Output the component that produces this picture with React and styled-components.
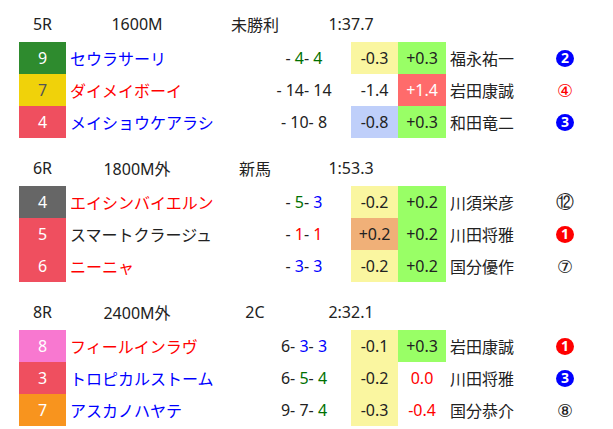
import React from "react"
import styled, { createGlobalStyle } from "styled-components"

const Global = createGlobalStyle`
  body {
    margin: 0;
    background: #fff;
    font-family: "Noto Sans", "Noto Sans CJK JP", sans-serif;
    font-size: 16px;
    color: #222;
  }
`

const Page = styled.div`
  padding: 6px 0 0 19px;
`

const Race = styled.section`
  margin-bottom: 12px;
`

const Header = styled.div`
  display: grid;
  grid-template-columns: 47px 142px 94px 98px;
  height: 36px;
  align-items: center;
  text-align: center;
`

const Row = styled.div`
  display: grid;
  grid-template-columns: 47px 191px 94px 47px 48px 94px 50px;
  height: 32px;
  align-items: center;
`

const Num = styled.div`
  height: 100%;
  display: flex;
  align-items: center;
  justify-content: center;
  background: ${(p) => p.$bg};
  color: ${(p) => p.$fg || "#fff"};
`

const Name = styled.div`
  padding-left: 4px;
  color: ${(p) => p.$color};
  white-space: nowrap;
`

const Pass = styled.div`
  text-align: center;
  white-space: pre;
`

const Corner = styled.span`
  color: ${(p) => p.$color || "inherit"};
`

const Diff = styled.div`
  height: 100%;
  display: flex;
  align-items: center;
  justify-content: center;
  background: ${(p) => p.$bg || "transparent"};
  color: ${(p) => p.$fg || "#222"};
`

const Jockey = styled.div`
  padding-left: 4px;
  white-space: nowrap;
`

const Pop = styled.div`
  display: flex;
  justify-content: center;
  align-items: center;
  font-family: "DejaVu Sans", sans-serif;
  font-size: 18px;
  color: ${(p) => p.$color || "#222"};
`

const Badge = styled.span`
  display: inline-flex;
  align-items: center;
  justify-content: center;
  width: 18px;
  height: 17px;
  border-radius: 50%;
  background: ${(p) => p.$color};
  color: #fff;
  font-family: "Noto Sans", sans-serif;
  font-size: 14px;
  font-weight: 700;
  line-height: 1;
`

const G = "#007000"
const B = "#0000ff"
const R = "#ff0000"

const frame = {
  green: ["#2e8b2e"],
  yellow: ["#f0d20a", "#555"],
  red: ["#ef4f5f"],
  gray: ["#666666"],
  pink: ["#f878d0"],
  orange: ["#f8941e"],
}

const races = [
  {
    head: ["5R", "1600M", "未勝利", "1:37.7"],
    rows: [
      { no: 9, f: "green", name: "セウラサーリ", nc: B, pass: [[""], ["4", G], ["4", G]], d1: ["-0.3", "#faf6a0"], d2: ["+0.3", "#99ff66"], jockey: "福永祐一", pop: { n: 2, c: B, fill: true } },
      { no: 7, f: "yellow", name: "ダイメイボーイ", nc: R, pass: [[""], ["14"], ["14"]], d1: ["-1.4"], d2: ["+1.4", "#ff6b6b", "#fff"], jockey: "岩田康誠", pop: { g: "④", c: R } },
      { no: 4, f: "red", name: "メイショウケアラシ", nc: B, pass: [[""], ["10"], ["8"]], d1: ["-0.8", "#bfcffa"], d2: ["+0.3", "#99ff66"], jockey: "和田竜二", pop: { n: 3, c: B, fill: true } },
    ],
  },
  {
    head: ["6R", "1800M外", "新馬", "1:53.3"],
    rows: [
      { no: 4, f: "gray", name: "エイシンバイエルン", nc: R, pass: [[""], ["5", G], ["3", B]], d1: ["-0.2", "#faf6a0"], d2: ["+0.2", "#99ff66"], jockey: "川須栄彦", pop: { g: "⑫" } },
      { no: 5, f: "red", name: "スマートクラージュ", nc: "#222", pass: [[""], ["1", R], ["1", R]], d1: ["+0.2", "#f0b078"], d2: ["+0.2", "#99ff66"], jockey: "川田将雅", pop: { n: 1, c: R, fill: true } },
      { no: 6, f: "red", name: "ニーニャ", nc: R, pass: [[""], ["3", B], ["3", B]], d1: ["-0.2", "#faf6a0"], d2: ["+0.2", "#99ff66"], jockey: "国分優作", pop: { g: "⑦" } },
    ],
  },
  {
    head: ["8R", "2400M外", "2C", "2:32.1"],
    rows: [
      { no: 8, f: "pink", name: "フィールインラヴ", nc: R, pass: [["6"], ["3", B], ["3", B]], d1: ["-0.1", "#faf6a0"], d2: ["+0.3", "#99ff66"], jockey: "岩田康誠", pop: { n: 1, c: R, fill: true } },
      { no: 3, f: "red", name: "トロピカルストーム", nc: B, pass: [["6"], ["5", G], ["4", G]], d1: ["-0.2", "#faf6a0"], d2: ["0.0", null, R], jockey: "川田将雅", pop: { n: 3, c: B, fill: true } },
      { no: 7, f: "orange", name: "アスカノハヤテ", nc: B, pass: [["9"], ["7"], ["4", G]], d1: ["-0.3", "#faf6a0"], d2: ["-0.4", null, R], jockey: "国分恭介", pop: { g: "⑧" } },
    ],
  },
]

const Passing = ({ items }) => (
  <Pass>
    {items.map(([v, c], i) => (
      <React.Fragment key={i}>
        {i > 0 && "- "}
        <Corner $color={c}>{v}</Corner>
      </React.Fragment>
    ))}
  </Pass>
)

const Popularity = ({ pop }) => (
  <Pop $color={pop.c}>
    {pop.fill ? <Badge $color={pop.c}>{pop.n}</Badge> : pop.g}
  </Pop>
)

export default function App() {
  return (
    <Page>
      <Global />
      {races.map((race) => (
        <Race key={race.head[0]}>
          <Header>
            {race.head.map((h) => (
              <div key={h}>{h}</div>
            ))}
          </Header>
          {race.rows.map((r) => (
            <Row key={r.no}>
              <Num $bg={frame[r.f][0]} $fg={frame[r.f][1]}>
                {r.no}
              </Num>
              <Name $color={r.nc}>{r.name}</Name>
              <Passing items={r.pass} />
              <Diff $bg={r.d1[1]} $fg={r.d1[2]}>
                {r.d1[0]}
              </Diff>
              <Diff $bg={r.d2[1]} $fg={r.d2[2]}>
                {r.d2[0]}
              </Diff>
              <Jockey>{r.jockey}</Jockey>
              <Popularity pop={r.pop} />
            </Row>
          ))}
        </Race>
      ))}
    </Page>
  )
}
